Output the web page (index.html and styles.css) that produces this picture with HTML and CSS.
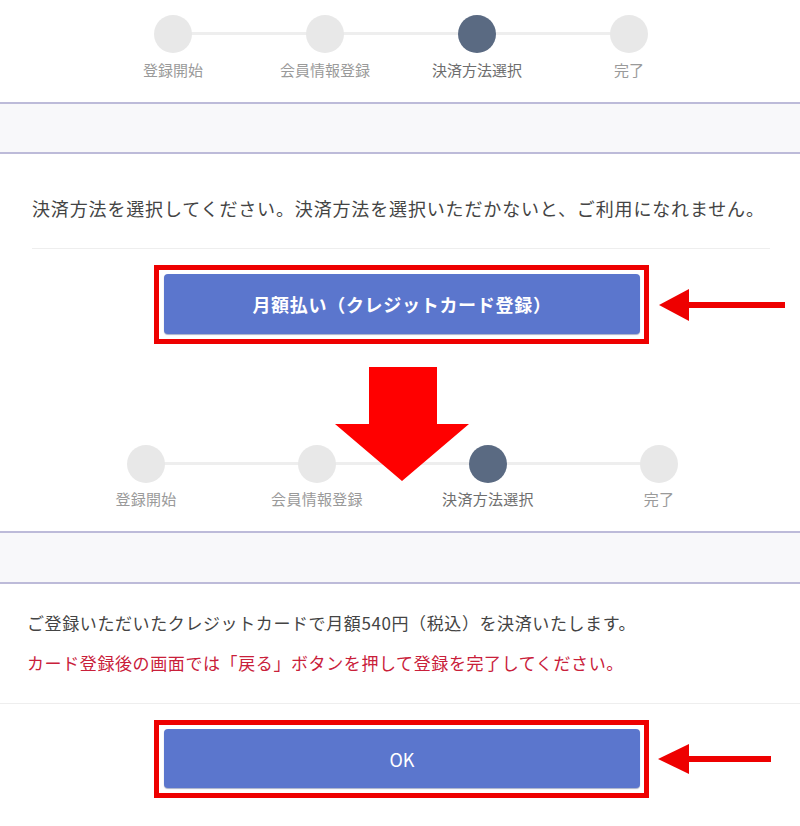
FILE: index.html
```html
<!DOCTYPE html>
<html lang="ja">
<head>
<meta charset="utf-8">
<title>決済方法選択</title>
<link rel="stylesheet" href="styles.css">
</head>
<body>
<section class="part part1">
  <div class="stepper s1">
    <div class="step"><span class="dot"></span><span class="label">登録開始</span></div>
    <div class="step"><span class="dot"></span><span class="label">会員情報登録</span></div>
    <div class="step active"><span class="dot"></span><span class="label">決済方法選択</span></div>
    <div class="step"><span class="dot"></span><span class="label">完了</span></div>
  </div>
  <div class="band b1"></div>
  <p class="intro">決済方法を選択してください。決済方法を選択いただかないと、ご利用になれません。</p>
  <hr class="sep sep1">
  <div class="action-row a1">
    <div class="redbox"><button class="btn btn-bold">月額払い（クレジットカード登録）</button></div>
    <svg class="side-arrow" width="126" height="32" viewBox="0 0 126 32"><polygon points="0,16 30,0 30,32" fill="#ee0000"/><rect x="29" y="13" width="97" height="6" fill="#ee0000"/></svg>
  </div>
</section>
<section class="part part2">
  <svg class="down-arrow" width="134" height="114" viewBox="0 0 134 114"><polygon points="34,0 102,0 102,57 134,57 67,114 0,57 34,57" fill="#ff0000"/></svg>
  <div class="stepper s2">
    <div class="step"><span class="dot"></span><span class="label">登録開始</span></div>
    <div class="step"><span class="dot"></span><span class="label">会員情報登録</span></div>
    <div class="step active"><span class="dot"></span><span class="label">決済方法選択</span></div>
    <div class="step"><span class="dot"></span><span class="label">完了</span></div>
  </div>
  <div class="band b2"></div>
  <p class="notice">ご登録いただいたクレジットカードで月額540円（税込）を決済いたします。</p>
  <p class="notice warn">カード登録後の画面では「戻る」ボタンを押して登録を完了してください。</p>
  <hr class="sep sep2">
  <div class="action-row a2">
    <div class="redbox"><button class="btn btn-ok">OK</button></div>
    <svg class="side-arrow" width="113" height="30" viewBox="0 0 113 30"><polygon points="0,15 31,0 31,30" fill="#ee0000"/><rect x="30" y="12" width="83" height="6" fill="#ee0000"/></svg>
  </div>
</section>
</body>
</html>
```
FILE: styles.css
```css
html, body {
  margin: 0;
  padding: 0;
  background: #ffffff;
}
body {
  width: 800px;
  font-family: "Noto Sans CJK JP", "Noto Sans", sans-serif;
  color: #444444;
}
.part {
  position: relative;
}
.stepper {
  display: flex;
  justify-content: center;
}
.s1 {
  padding-top: 15px;
  padding-left: 2px;
  height: 87px;
}
.s1 .step {
  width: 152px;
}
.s2 {
  padding-top: 101px;
  padding-left: 5px;
}
.s2 .step {
  width: 171px;
}
.step {
  position: relative;
  display: flex;
  flex-direction: column;
  align-items: center;
}
.step + .step::before {
  content: "";
  position: absolute;
  top: 17px;
  right: 50%;
  width: 100%;
  height: 3px;
  background: #eeeeee;
  z-index: 0;
}
.dot {
  position: relative;
  z-index: 1;
  width: 38px;
  height: 38px;
  border-radius: 50%;
  background: #e8e8e8;
}
.step.active .dot {
  background: #5a6a82;
}
.label {
  margin-top: 8px;
  font-size: 15px;
  line-height: 18px;
  color: #9a9a9a;
  white-space: nowrap;
}
.s2 .label {
  margin-top: 7px;
  letter-spacing: 0.3px;
}
.step.active .label {
  color: #6e6e6e;
}
.band {
  background: #f8f8fa;
  border-top: 2px solid #bdbbd9;
  border-bottom: 2px solid #bdbbd9;
}
.b1 {
  height: 48px;
}
.b2 {
  height: 49px;
  margin-top: 23px;
}
.intro {
  margin: 41px 0 0 32px;
  font-size: 18px;
  line-height: 26px;
  letter-spacing: 0.85px;
  color: #444444;
  white-space: nowrap;
}
.notice {
  margin: 27px 0 0 27px;
  font-size: 17px;
  line-height: 24px;
  letter-spacing: 0.6px;
  color: #444444;
  white-space: nowrap;
}
.notice.warn {
  margin-top: 16px;
  color: #c9203a;
}
.sep {
  border: 0;
  height: 1px;
  background: #eeeeee;
}
.sep1 {
  margin: 27px 30px 0 32px;
}
.sep2 {
  margin: 28px 0 0 0;
}
.action-row {
  display: flex;
  align-items: center;
  padding-left: 154px;
  margin-top: 16px;
}
.redbox {
  border: 5px solid #ee0000;
  padding: 4px 4px 5px 5px;
  background: #ffffff;
}
.btn {
  display: block;
  width: 476px;
  height: 60px;
  border: 0;
  border-radius: 4px;
  background: #5b76cd;
  color: #ffffff;
  font-family: "Noto Sans CJK JP", "Noto Sans", sans-serif;
  font-size: 18px;
  padding: 0;
  box-shadow: 0 1px 1px rgba(40, 60, 120, 0.4);
}
.a2 .btn {
  height: 59px;
}
.btn-bold {
  font-weight: bold;
  letter-spacing: 0.7px;
}
.btn-ok {
  font-weight: normal;
}
.a1 .side-arrow {
  margin-left: 10px;
}
.a2 .side-arrow {
  margin-left: 9px;
}
.down-arrow {
  position: absolute;
  left: 335px;
  top: 23px;
  z-index: 5;
}
```
